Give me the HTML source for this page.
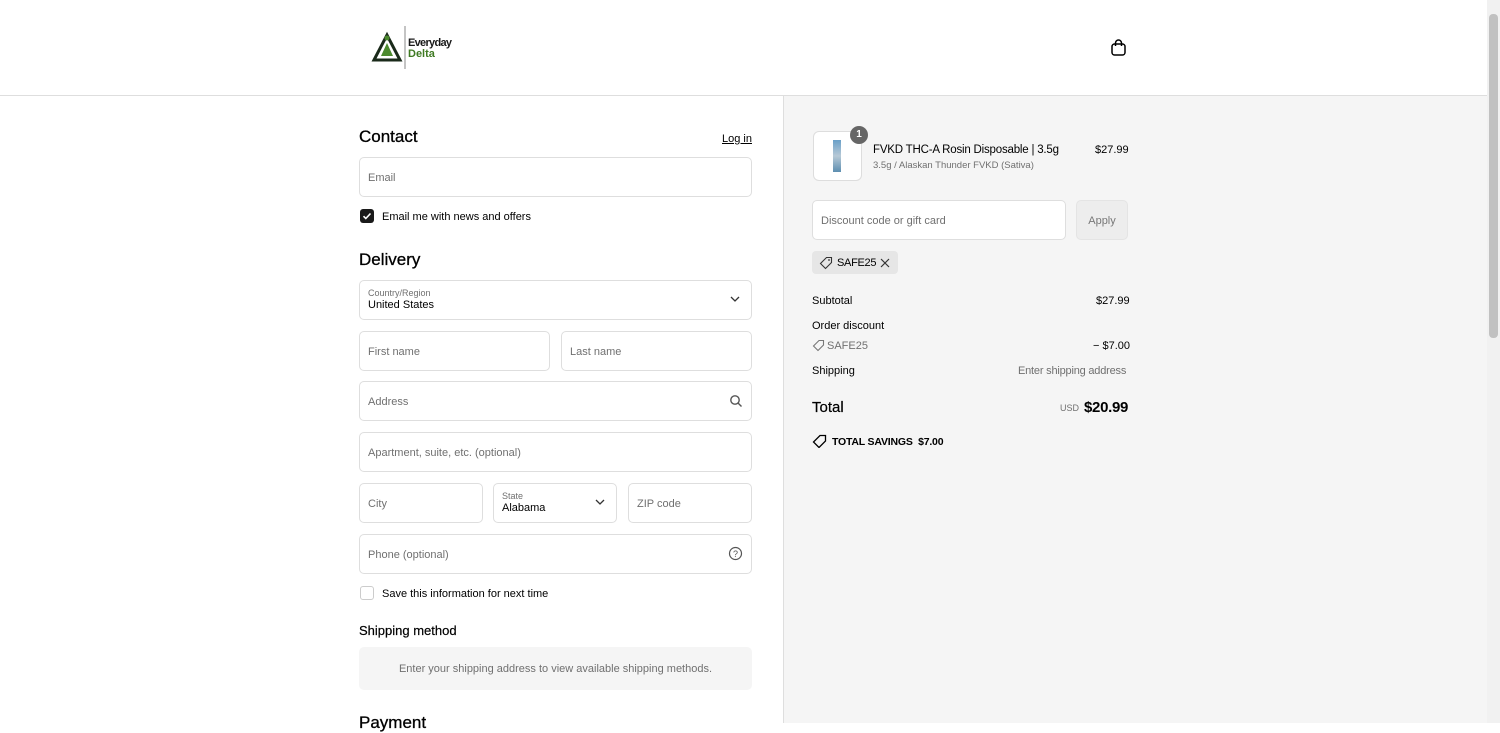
<!DOCTYPE html>
<html><head><style>
*{box-sizing:border-box;margin:0;padding:0}
body{width:1500px;height:723px;overflow:hidden;font-family:"Liberation Sans",sans-serif;color:#000;background:#fff;position:relative}
.abs{position:absolute}
.hdr{left:0;top:0;width:1487px;height:96px;border-bottom:1px solid #dedede;background:#fff}
.right{left:783px;top:96px;width:704px;height:627px;background:#f5f5f5;border-left:1px solid #dedede}
.sb{left:1487px;top:0;width:13px;height:723px;background:#f1f1f1}
.sbt{left:1489px;top:14px;width:9px;height:324px;background:#c1c1c1;border-radius:4px}
.inp{position:absolute;border:1px solid #dedede;border-radius:5px;height:40px;background:#fff;font-size:11px;color:#707070;padding:1px 8px 0;display:flex;align-items:center}
h2{position:absolute;font-size:17px;font-weight:normal;color:#000;-webkit-text-stroke:0.3px #000}
.t{position:absolute;font-size:11px;white-space:nowrap}
.g{color:#707070}
</style></head><body>
<div class="abs hdr"></div>
<svg class="abs" style="left:371px;top:25px" width="90" height="46" viewBox="0 0 90 46">
<polygon points="3,35 16,10 29,35" fill="none" stroke="#1a2a1a" stroke-width="3"/>
<polygon points="10,31 16,18 22,31" fill="#4c8a2e"/>
<circle cx="16" cy="13" r="2.5" fill="#4c8a2e"/>
<line x1="34" y1="1" x2="34" y2="44" stroke="#888" stroke-width="1"/>
<text x="37" y="21" font-family="Liberation Sans Narrow,Liberation Sans" font-weight="bold" font-size="11" fill="#1a1a1a" textLength="44">Everyday</text>
<text x="37" y="32" font-family="Liberation Sans Narrow,Liberation Sans" font-weight="bold" font-size="11" fill="#3f7a23">Delta</text>
</svg>
<svg class="abs" style="left:1110px;top:39px" width="17" height="18" viewBox="0 0 17 18"><rect x="2" y="5" width="13" height="11" rx="2.5" fill="none" stroke="#000" stroke-width="1.5"/><path d="M5.5 7V4a3 3 0 0 1 6 0v3" fill="none" stroke="#000" stroke-width="1.5"/></svg>
<div class="abs right"></div>
<div class="abs sb"></div><div class="abs sbt"></div>

<h2 style="left:359px;top:127px">Contact</h2>
<div class="t" style="left:722px;top:133px;text-decoration:underline;font-size:11px">Log in</div>
<div class="inp" style="left:359px;top:157px;width:393px">Email</div>
<div class="abs" style="left:360px;top:209px;width:14px;height:14px;background:#1a1a1a;border-radius:3px"></div>
<svg class="abs" style="left:360px;top:209px" width="14" height="14"><path d="M3.5 7.2l2.3 2.3 4.7-5" fill="none" stroke="#fff" stroke-width="1.6"/></svg>
<div class="t" style="left:382px;top:211px">Email me with news and offers</div>

<h2 style="left:359px;top:250px">Delivery</h2>
<div class="inp" style="left:359px;top:280px;width:393px;display:block;padding-top:7px"><div style="font-size:9px">Country/Region</div><div style="color:#000;font-size:11px;margin-top:1px">United States</div></div>
<svg class="abs" style="left:730px;top:295px" width="10" height="8"><path d="M1 2l4 4 4-4" fill="none" stroke="#333" stroke-width="1.3"/></svg>
<div class="inp" style="left:359px;top:331px;width:191px">First name</div>
<div class="inp" style="left:561px;top:331px;width:191px">Last name</div>
<div class="inp" style="left:359px;top:381px;width:393px">Address</div>
<svg class="abs" style="left:729px;top:394px" width="14" height="14"><circle cx="6" cy="6" r="4.2" fill="none" stroke="#555" stroke-width="1.4"/><path d="M9 9l3.5 3.5" stroke="#555" stroke-width="1.4"/></svg>
<div class="inp" style="left:359px;top:432px;width:393px">Apartment, suite, etc. (optional)</div>
<div class="inp" style="left:359px;top:483px;width:124px">City</div>
<div class="inp" style="left:493px;top:483px;width:124px;display:block;padding-top:7px"><div style="font-size:9px">State</div><div style="color:#000;margin-top:1px">Alabama</div></div>
<svg class="abs" style="left:595px;top:498px" width="10" height="8"><path d="M1 2l4 4 4-4" fill="none" stroke="#333" stroke-width="1.3"/></svg>
<div class="inp" style="left:628px;top:483px;width:124px">ZIP code</div>
<div class="inp" style="left:359px;top:534px;width:393px">Phone (optional)</div>
<svg class="abs" style="left:728px;top:546px" width="15" height="15"><circle cx="7.5" cy="7.5" r="6" fill="none" stroke="#555" stroke-width="1.2"/><text x="7.5" y="11" font-size="9" text-anchor="middle" fill="#555" font-family="Liberation Sans">?</text></svg>
<div class="abs" style="left:360px;top:586px;width:14px;height:14px;border:1px solid #ccc;border-radius:3px;background:#fff"></div>
<div class="t" style="left:382px;top:588px">Save this information for next time</div>
<div class="t" style="left:359px;top:623px;font-size:13px;-webkit-text-stroke:0.2px #000">Shipping method</div>
<div class="abs" style="left:359px;top:647px;width:393px;height:43px;background:#f5f5f5;border-radius:5px;font-size:11px;color:#707070;text-align:center;line-height:45px">Enter your shipping address to view available shipping methods.</div>
<h2 style="left:359px;top:713px">Payment</h2>

<div class="abs" style="left:813px;top:131px;width:49px;height:50px;border:1px solid #ddd;border-radius:6px;background:#fff"></div>
<div class="abs" style="left:833px;top:140px;width:8px;height:32px;background:linear-gradient(#6aa0c8,#b7c9d6,#5d8eb0)"></div>
<div class="abs" style="left:850px;top:126px;width:18px;height:18px;border-radius:9px;background:#666;color:#fff;font-size:10px;text-align:center;line-height:18px;font-weight:bold">1</div>
<div class="t" style="left:873px;top:144px;font-size:11.5px;letter-spacing:-0.2px">FVKD THC-A Rosin Disposable | 3.5g</div>
<div class="t g" style="left:873px;top:160px;font-size:9.5px">3.5g / Alaskan Thunder FVKD (Sativa)</div>
<div class="t" style="left:1095px;top:144px">$27.99</div>
<div class="inp" style="left:812px;top:200px;width:254px">Discount code or gift card</div>
<div class="abs" style="left:1076px;top:200px;width:52px;height:40px;border:1px solid #e4e4e4;border-radius:5px;background:#ededed;color:#777;font-size:11px;text-align:center;line-height:40px">Apply</div>
<div class="abs" style="left:812px;top:251px;width:86px;height:23px;background:#e6e6e6;border-radius:4px"></div>
<svg class="abs" style="left:819px;top:256px" width="14" height="14"><path d="M7.5 1.5H12.5V6.5L6.5 12.5 1.5 7.5z" fill="none" stroke="#333" stroke-width="1.1"/><circle cx="10" cy="4" r="0.9" fill="#333"/></svg>
<div class="t" style="left:837px;top:257px;letter-spacing:-0.3px">SAFE25</div>
<svg class="abs" style="left:880px;top:258px" width="10" height="10"><path d="M1 1l8 8M9 1l-8 8" stroke="#333" stroke-width="1.2"/></svg>
<div class="t" style="left:812px;top:295px">Subtotal</div><div class="t" style="left:1096px;top:295px">$27.99</div>
<div class="t" style="left:812px;top:320px">Order discount</div>
<svg class="abs" style="left:812px;top:339px" width="13" height="13"><path d="M7 1.5H11.5V6L6 11.5 1.5 7z" fill="none" stroke="#777" stroke-width="1.1"/></svg>
<div class="t g" style="left:827px;top:340px">SAFE25</div><div class="t" style="left:1093px;top:340px">− $7.00</div>
<div class="t" style="left:812px;top:365px">Shipping</div><div class="t g" style="left:1018px;top:365px;letter-spacing:-0.2px">Enter shipping address</div>
<div class="t" style="left:812px;top:399px;font-size:15px;-webkit-text-stroke:0.2px #000">Total</div>
<div class="t g" style="left:1060px;top:403px;font-size:9px">USD</div>
<div class="t" style="left:1084px;top:399px;font-size:15px;font-weight:bold;letter-spacing:-0.3px">$20.99</div>
<svg class="abs" style="left:812px;top:434px" width="15" height="14"><path d="M8 1.5H13.5V7L7 13.5 1.5 8z" fill="none" stroke="#000" stroke-width="1.3"/></svg>
<div class="t" style="left:832px;top:436px;font-weight:bold;font-size:10.5px;letter-spacing:-0.2px">TOTAL SAVINGS &nbsp;$7.00</div>
</body></html>
